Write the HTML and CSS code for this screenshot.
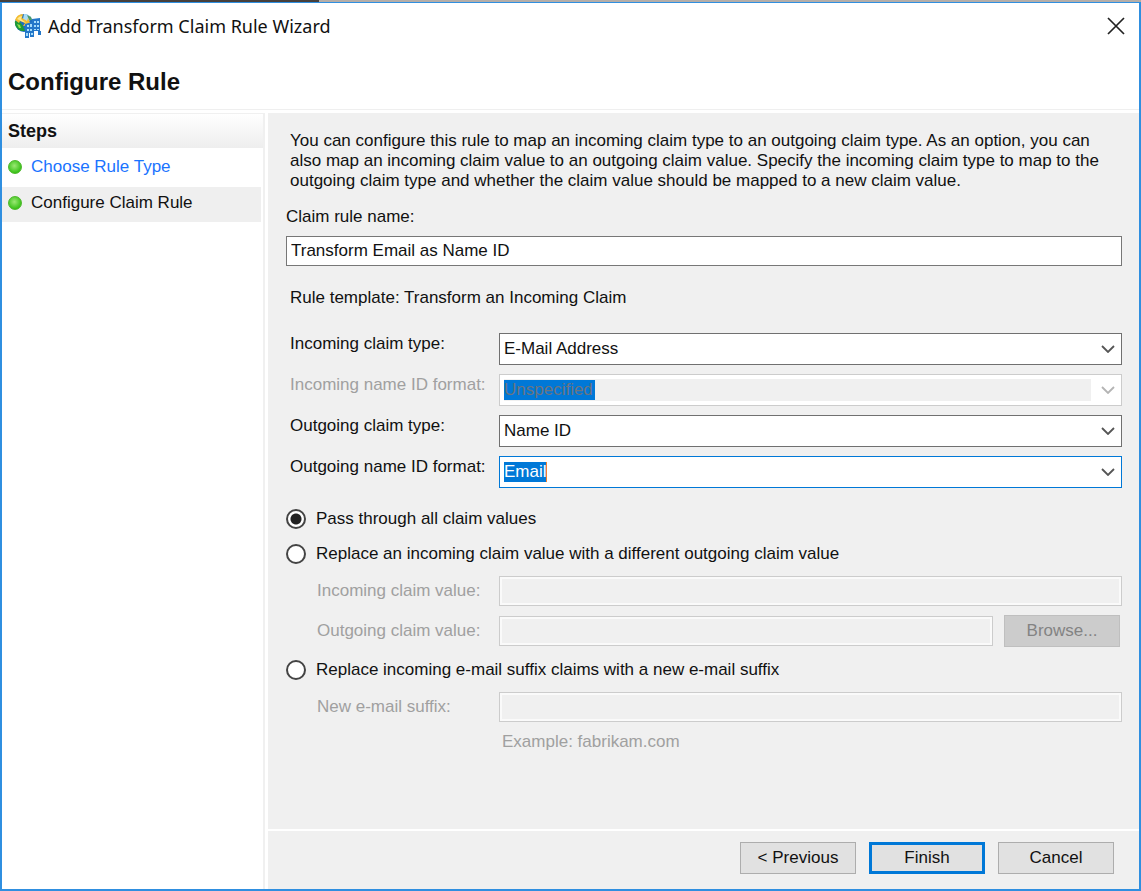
FILE: index.html
```html
<!DOCTYPE html>
<html lang="en">
<head>
<meta charset="utf-8">
<title>Add Transform Claim Rule Wizard</title>
<link rel="stylesheet" href="styles.css">
</head>
<body>
<div class="backdrop"></div>
<div class="window">
  <header class="titlebar">
    <svg class="app-icon" viewBox="0 0 28 26" aria-hidden="true">
      <circle cx="10" cy="10" r="9" fill="#1d6fbe"/>
      <path d="M10 1 A9 9 0 0 1 18 6 L13 9 L9 6Z" fill="#a9dcf5"/>
      <path d="M13 2 L17 4 L18 7 L15 7Z" fill="#4d9a6a"/>
      <path d="M1 8 L6 9 L9 13 L11 18 L7 18 A9 9 0 0 1 1 8Z" fill="#1f9a35"/>
      <path d="M3 11 L6 12 L7 15 L5 15Z" fill="#8fe04e"/>
      <path d="M1 7 Q3 1 9 1 L8 5 L13 8 L14 5 L17 12 L9 13 L11 10 L6 8 L5 10Z" fill="#f5bd2f"/>
      <path d="M3 6 Q5 3 8 3 L7 6 L12 10 L9 9 L5 7Z" fill="#fde890"/>
      <path d="M11 11 L18 9 V6 L26 5 V18 H27 V22 H24 V18 H20 V24 H16 V20 H15 V25 H11Z" fill="#2377c9"/>
      <path d="M13 12h2v2h-2zM16 11h2v3h-2zM20 8h2v2h-2zM23 8h2v2h-2zM20 12h2v2h-2zM23 12h2v2h-2zM13 16h2v2h-2zM16 16h2v2h-2zM20 16h2v1h-2zM23 16h2v1h-2zM12 20h2v3h-2zM17 20h2v2h-2z" fill="#a5dcfa"/>
    </svg>
    <h1 class="title">Add Transform Claim Rule Wizard</h1>
    <button class="close" type="button" aria-label="Close">
      <svg viewBox="0 0 18 18" aria-hidden="true"><path d="M1 1 L17 17 M17 1 L1 17" stroke="#222" stroke-width="1.7" fill="none"/></svg>
    </button>
  </header>
  <h2 class="page-heading">Configure Rule</h2>
  <div class="body">
    <nav class="sidebar">
      <h3 class="steps-title">Steps</h3>
      <ol class="steps">
        <li class="step"><span class="dot"></span><a class="step-link" href="#">Choose Rule Type</a></li>
        <li class="step step-current"><span class="dot"></span>Configure Claim Rule</li>
      </ol>
    </nav>
    <form class="panel">
      <main class="content">
        <p class="intro">You can configure this rule to map an incoming claim type to an outgoing claim type. As an option, you can<br>also map an incoming claim value to an outgoing claim value. Specify the incoming claim type to map to the<br>outgoing claim type and whether the claim value should be mapped to a new claim value.</p>
        <label class="name-label" for="rule-name">Claim rule name:</label>
        <input class="field" id="rule-name" type="text" value="Transform Email as Name ID">
        <p class="template">Rule template: Transform an Incoming Claim</p>
        <div class="combos">
          <label class="combo-label" for="in-type">Incoming claim type:</label>
          <div class="combo">
            <select class="select" id="in-type"><option>E-Mail Address</option></select>
            <svg class="chevron" viewBox="0 0 14 8" aria-hidden="true"><path d="M1 1 L7 7 L13 1"/></svg>
          </div>
          <label class="combo-label muted" for="in-format">Incoming name ID format:</label>
          <div class="combo combo-off">
            <select class="select" id="in-format" disabled><option>Unspecified</option></select>
            <svg class="chevron" viewBox="0 0 14 8" aria-hidden="true"><path d="M1 1 L7 7 L13 1"/></svg>
          </div>
          <label class="combo-label" for="out-type">Outgoing claim type:</label>
          <div class="combo">
            <select class="select" id="out-type"><option>Name ID</option></select>
            <svg class="chevron" viewBox="0 0 14 8" aria-hidden="true"><path d="M1 1 L7 7 L13 1"/></svg>
          </div>
          <label class="combo-label" for="out-format">Outgoing name ID format:</label>
          <div class="combo combo-active">
            <select class="select" id="out-format"><option>Email</option></select>
            <svg class="chevron" viewBox="0 0 14 8" aria-hidden="true"><path d="M1 1 L7 7 L13 1"/></svg>
          </div>
        </div>
        <label class="choice"><input class="radio" type="radio" name="mode" checked>Pass through all claim values</label>
        <label class="choice"><input class="radio" type="radio" name="mode">Replace an incoming claim value with a different outgoing claim value</label>
        <div class="sub">
          <label class="muted" for="in-value">Incoming claim value:</label>
          <input class="field" id="in-value" type="text" disabled>
          <label class="muted" for="out-value">Outgoing claim value:</label>
          <div class="browse-row">
            <input class="field" id="out-value" type="text" disabled>
            <button class="button" type="button" disabled>Browse...</button>
          </div>
        </div>
        <label class="choice"><input class="radio" type="radio" name="mode">Replace incoming e-mail suffix claims with a new e-mail suffix</label>
        <div class="sub">
          <label class="muted" for="suffix">New e-mail suffix:</label>
          <input class="field" id="suffix" type="text" disabled>
          <p class="example muted">Example: fabrikam.com</p>
        </div>
      </main>
      <footer class="footer">
        <button class="button" type="button">&lt; Previous</button>
        <button class="button button-default" type="button">Finish</button>
        <button class="button" type="button">Cancel</button>
      </footer>
    </form>
  </div>
</div>
</body>
</html>
```
FILE: styles.css
```css
* { box-sizing: border-box; }

body {
  margin: 0;
  min-height: 100vh;
  display: flex;
  flex-direction: column;
  background: #fff;
  color: #111;
  font-family: "Liberation Sans", Arial, sans-serif;
  font-size: 17px;
  line-height: 20px;
}

h1, h2, h3, p, ol { margin: 0; padding: 0; font-weight: normal; }
input, select, button { font: inherit; color: inherit; margin: 0; }

.backdrop {
  height: 2px;
  background: linear-gradient(90deg, #46403c 0 28%, #b5aea8 28%);
}

.window {
  flex: 1;
  display: flex;
  flex-direction: column;
  border: 2px solid #2f8fe0;
  border-top-width: 1px;
}

.titlebar {
  display: flex;
  align-items: center;
  height: 45px;
  padding: 0 14px 0 12px;
}
.app-icon { width: 28px; height: 26px; margin-right: 6px; }
.title {
  flex: 1;
  font-family: "Noto Sans", "Open Sans", sans-serif;
  font-size: 18px;
}
.close { display: flex; padding: 0; border: 0; background: none; }
.close svg { width: 18px; height: 18px; }

.page-heading {
  padding: 22px 6px 15px;
  font-size: 24px;
  line-height: 24px;
  font-weight: bold;
  border-bottom: 1px solid #efefef;
}

.body { flex: 1; display: flex; padding-top: 3px; }

.sidebar {
  flex: 0 0 263px;
  border-top: 1px solid #f0f0f0;
  border-right: 2px solid #f0f0f0;
}
.steps-title {
  padding: 7px 6px;
  font-size: 18px;
  font-weight: bold;
  background: linear-gradient(#fff, #eee);
}
.steps { list-style: none; }
.step {
  display: flex;
  align-items: center;
  gap: 9px;
  height: 35px;
  margin: 2px 2px 0 0;
  padding: 0 6px 2px;
}
.step-current { padding-bottom: 4px; background: #efefef; }
.step-link { color: #1a73ff; text-decoration: none; }
.dot {
  width: 14px;
  height: 14px;
  border-radius: 50%;
  border: 1px solid #4cb82a;
  background: radial-gradient(circle at 45% 40%, #9be874, #35c014 75%);
}

.panel {
  flex: 1;
  min-width: 0;
  display: flex;
  flex-direction: column;
  margin-left: 3px;
  background: #f0f0f0;
}
.content {
  flex: 1;
  display: flex;
  flex-direction: column;
  padding: 18px 17px 0 18px;
}
.intro { padding-left: 4px; }
.name-label { margin-top: 16px; }

.field {
  width: 100%;
  height: 30px;
  padding: 0 4px;
  border: 1px solid #777;
  border-radius: 0;
  background: #fff;
}
.name-label + .field { margin-top: 9px; }
.field:disabled {
  border-color: #ccc;
  background: #f0f0f0;
  box-shadow: inset 0 0 0 2px #fafafa;
}
.template { margin-top: 22px; padding-left: 4px; }

.muted { color: #a0a0a0; }

.combos {
  display: grid;
  grid-template-columns: 209px 1fr;
  row-gap: 9px;
  margin: 25px 0 18px 4px;
}
.combo { display: grid; align-items: center; height: 32px; }
.combo > * { grid-area: 1 / 1; }
.combo-label { padding-top: 1px; }
.select {
  appearance: none;
  width: 100%;
  height: 32px;
  padding: 0 4px;
  border: 1px solid #707070;
  border-radius: 0;
  background: #fff;
  opacity: 1;
}
.chevron {
  width: 14px;
  height: 8px;
  margin-right: 7px;
  justify-self: end;
  fill: none;
  stroke: #555;
  stroke-width: 1.8;
  pointer-events: none;
}
.combo-off .select {
  border-color: #ccc;
  color: #6b7480;
  background:
    linear-gradient(#0078d7, #0078d7) 4px 5px / 91px 20px no-repeat,
    linear-gradient(#f0f0f0, #f0f0f0) 4px 4px / calc(100% - 34px) 22px no-repeat,
    #fff;
}
.combo-off .chevron { stroke: #b4b4b4; }
.combo-active .select {
  border-color: #0078d7;
  outline: 0;
  color: #fff;
  background:
    linear-gradient(90deg, #0078d7 42px, #f08030 42px) 4px 5px / 43px 20px no-repeat,
    #fff;
}

.choice { display: flex; align-items: center; gap: 10px; height: 35px; margin-top: -5px; }
.choice + .choice { margin-top: 0; }
.radio {
  appearance: none;
  width: 20px;
  height: 20px;
  border: 2px solid #444;
  border-radius: 50%;
  background: #fff;
}
.radio:checked { background: radial-gradient(circle, #222 5px, #fff 6px); }

.sub {
  display: grid;
  grid-template-columns: 182px 1fr;
  align-items: center;
  row-gap: 9px;
  margin: 5px 0 10px 31px;
}
.browse-row { display: grid; grid-template-columns: 1fr 116px; gap: 11px; padding-right: 2px; align-items: center; }
.example { grid-column: 2; padding: 1px 0 0 3px; }

.button {
  width: 116px;
  height: 32px;
  padding: 0;
  border: 1px solid #adadad;
  border-radius: 0;
  background: #e1e1e1;
}
.button:disabled { border-color: #bfbfbf; background: #ccc; color: #838383; }
.button-default { border: 3px solid #0078d7; }

.footer {
  display: flex;
  justify-content: flex-end;
  gap: 13px;
  padding: 11px 25px 15px;
  border-top: 2px solid #fff;
}
```
